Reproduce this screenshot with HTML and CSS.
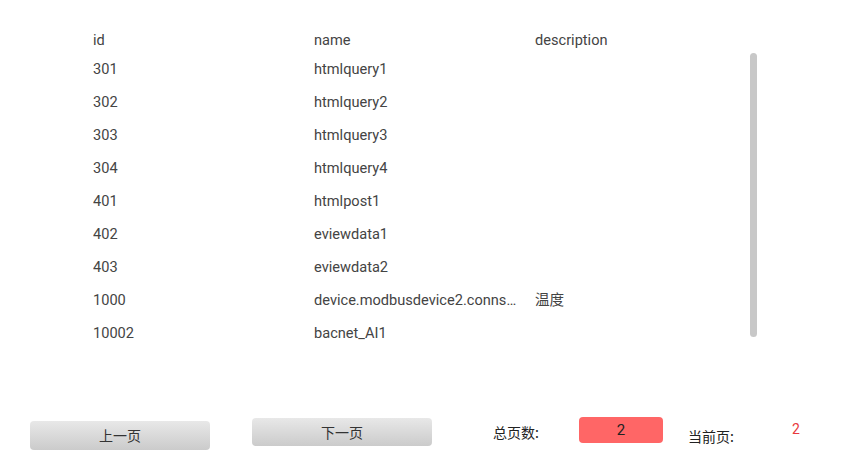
FILE: index.html
```html
<!DOCTYPE html>
<html>
<head>
<meta charset="utf-8">
<link rel="stylesheet" href="styles.css">
</head>
<body>
<div class="page">
  <div class="table-wrap">
    <div class="table">
      <div class="row head"><div class="cell">id</div><div class="cell">name</div><div class="cell">description</div></div>
      <div class="row"><div class="cell">301</div><div class="cell">htmlquery1</div><div class="cell"></div></div>
      <div class="row"><div class="cell">302</div><div class="cell">htmlquery2</div><div class="cell"></div></div>
      <div class="row"><div class="cell">303</div><div class="cell">htmlquery3</div><div class="cell"></div></div>
      <div class="row"><div class="cell">304</div><div class="cell">htmlquery4</div><div class="cell"></div></div>
      <div class="row"><div class="cell">401</div><div class="cell">htmlpost1</div><div class="cell"></div></div>
      <div class="row"><div class="cell">402</div><div class="cell">eviewdata1</div><div class="cell"></div></div>
      <div class="row"><div class="cell">403</div><div class="cell">eviewdata2</div><div class="cell"></div></div>
      <div class="row"><div class="cell">1000</div><div class="cell">device.modbusdevice2.connstatus</div><div class="cell">温度</div></div>
      <div class="row"><div class="cell">10002</div><div class="cell">bacnet_AI1</div><div class="cell"></div></div>
    </div>
    <div class="scrollbar"></div>
  </div>
  <div class="pager">
    <div class="btn prev">上一页</div>
    <div class="btn next">下一页</div>
    <div class="label total-label">总页数:</div>
    <div class="total-box">2</div>
    <div class="label cur-label">当前页:</div>
    <div class="cur-val">2</div>
  </div>
</div>
</body>
</html>
```
FILE: styles.css
```css
html, body {
  margin: 0;
  padding: 0;
  background: #fff;
}
.page {
  width: 843px;
  height: 465px;
  font-family: Roboto, "Noto Sans CJK SC", sans-serif;
  color: #444;
  font-size: 14.6px;
}
.table-wrap {
  display: flex;
  padding-top: 30px;
  padding-left: 93px;
  height: 330px;
}
.table {
  width: 663px;
}
.row {
  display: flex;
  height: 33px;
  line-height: 20px;
}
.row.head {
  height: 29px;
}
.cell {
  width: 221px;
  padding-right: 16px;
  box-sizing: border-box;
  white-space: nowrap;
  overflow: hidden;
  text-overflow: ellipsis;
}
.scrollbar {
  width: 7px;
  height: 284px;
  margin-top: 23px;
  margin-left: -6px;
  background: #c8c8c8;
  border-radius: 4px;
}
.pager {
  display: flex;
  align-items: flex-start;
  margin-top: 58px;
  padding-left: 30px;
  font-family: "Noto Sans CJK SC", sans-serif;
  font-size: 14px;
}
.btn {
  width: 180px;
  box-sizing: border-box;
  text-align: center;
  border-radius: 4px;
  background: linear-gradient(#e8e8e8, #cbcbcb);
  color: #333;
}
.prev {
  height: 29px;
  line-height: 29px;
  margin-top: 3px;
}
.next {
  height: 28px;
  line-height: 28px;
  margin-left: 42px;
}
.label {
  color: #222;
  font-size: 14px;
  width: 46px;
  white-space: nowrap;
}
.total-label {
  margin-left: 61px;
  margin-top: 4px;
}
.total-box {
  margin-left: 40px;
  width: 84px;
  height: 26px;
  line-height: 26px;
  text-align: center;
  background: #ff6666;
  border-radius: 4px;
  color: #222;
  font-family: Roboto, sans-serif;
  font-size: 15px;
  margin-top: -1px;
}
.cur-label {
  margin-left: 25px;
  margin-top: 8px;
}
.cur-val {
  margin-left: 58px;
  margin-top: 3px;
  color: #e8383d;
  font-family: Roboto, sans-serif;
  font-size: 14px;
}
```
